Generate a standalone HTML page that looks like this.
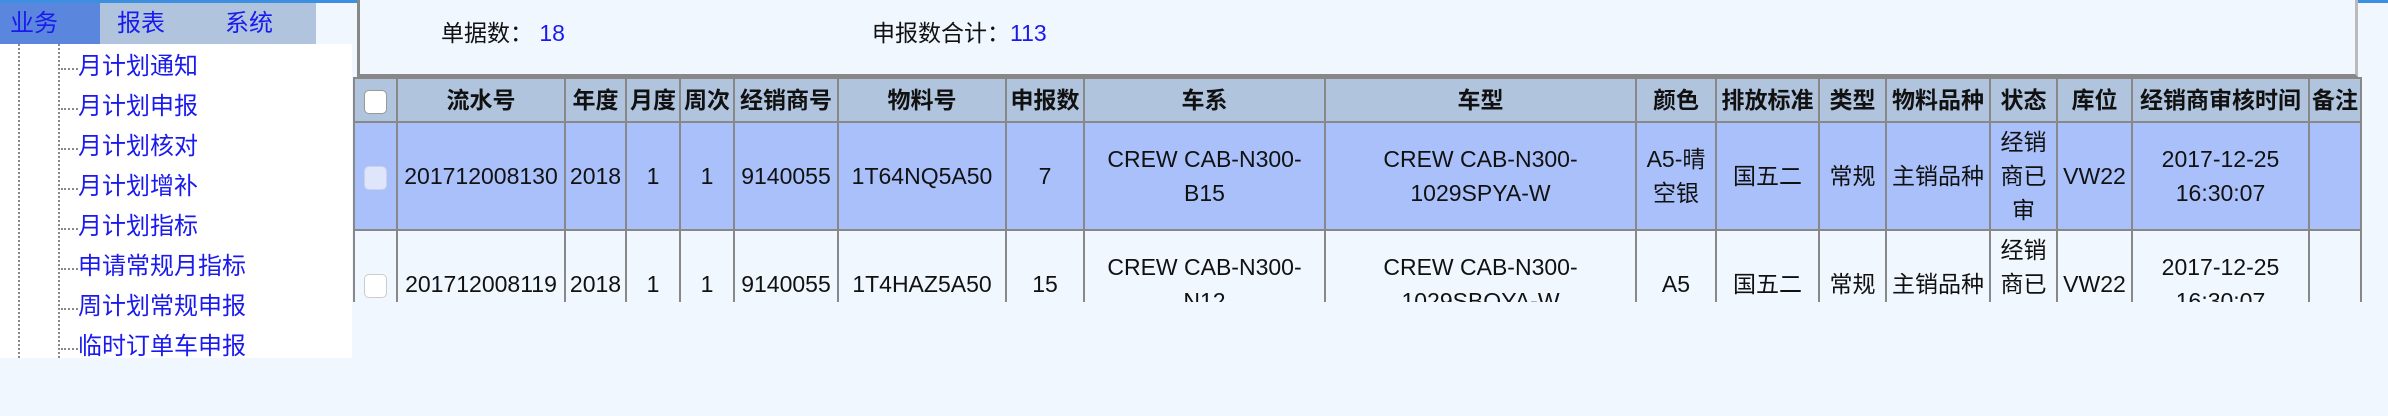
<!DOCTYPE html>
<html><head><meta charset="utf-8"><style>
*{margin:0;padding:0;box-sizing:border-box}
body{width:2388px;height:416px;overflow:hidden;background:#f0f7fe;font-family:"Liberation Sans","Noto Sans CJK SC",sans-serif;position:relative}
.topline{position:absolute;left:0;top:0;width:2388px;height:3px;background:#3d8fe0}
.tabs{position:absolute;left:0;top:3px;width:316px;height:41px;background:#b0c4de}
.tab{position:absolute;top:0;height:41px;line-height:41px;font-size:24px;color:#1a1aee}
.left{position:absolute;left:0;top:44px;width:352px;height:314px;background:#fff}
.vl{position:absolute;border-left:2px dotted #888}
.item{position:absolute;left:78px;font-size:24px;color:#1a1aee;line-height:28px}
.hl{position:absolute;left:61px;width:17px;border-top:2px dotted #888}
.stats{position:absolute;left:357px;top:0;width:2001px;height:77px;border-left:3px solid #888;border-right:3px solid #bbb;border-bottom:3px solid #888;background:#f0f7fe}
.st{position:absolute;top:18px;font-size:23px;line-height:30px;color:#111}
.st b{font-weight:normal;color:#1a1aee}
.tw{position:absolute;left:353px;top:77px;width:2011px;height:225px;overflow:hidden}
table{border-collapse:collapse;table-layout:fixed;width:2007px}
td,th{border:2px solid #888;text-align:center;font-size:23px;line-height:34px;color:#111;padding:0;overflow:hidden;white-space:normal}
th{background:#b0c4de;height:44px;font-weight:bold;white-space:nowrap}
tr.r1 td{background:#a9c0fa;height:108px}
tr.r2 td{background:#f0f7fe;height:108px}
.cb{display:inline-block;width:23px;height:24px;border-radius:5px;border:1px solid #ccc;background:#fff;vertical-align:middle}
tr.r1 .cb{background:#dfe6fb;border-color:#c8d2ee}
</style></head><body>
<div class="topline"></div>
<div class="tabs">
<div style="position:absolute;left:0;top:0;width:100px;height:41px;background:#5a86dd"></div>
<div class="tab" style="left:10px">业务</div>
<div class="tab" style="left:117px">报表</div>
<div class="tab" style="left:225px">系统</div>
</div>
<div class="left">
<div class="vl" style="left:18px;top:0;height:314px"></div>
<div class="vl" style="left:58px;top:0;height:314px"></div>
</div>
<div class="hl" style="top:68px"></div><div class="item" style="top:53px">月计划通知</div>
<div class="hl" style="top:108px"></div><div class="item" style="top:93px">月计划申报</div>
<div class="hl" style="top:148px"></div><div class="item" style="top:133px">月计划核对</div>
<div class="hl" style="top:188px"></div><div class="item" style="top:173px">月计划增补</div>
<div class="hl" style="top:228px"></div><div class="item" style="top:213px">月计划指标</div>
<div class="hl" style="top:268px"></div><div class="item" style="top:253px">申请常规月指标</div>
<div class="hl" style="top:308px"></div><div class="item" style="top:293px">周计划常规申报</div>
<div class="hl" style="top:348px"></div><div class="item" style="top:333px">临时订单车申报</div>

<div class="stats">
<div class="st" style="left:81px">单据数：&nbsp;<b>18</b></div>
<div class="st" style="left:512px">申报数合计：<b>113</b></div>
</div>
<div class="tw"><table>
<colgroup><col style="width:43px"><col style="width:168px"><col style="width:61px"><col style="width:54px"><col style="width:54px"><col style="width:104px"><col style="width:168px"><col style="width:78px"><col style="width:241px"><col style="width:311px"><col style="width:80px"><col style="width:103px"><col style="width:67px"><col style="width:104px"><col style="width:67px"><col style="width:75px"><col style="width:177px"><col style="width:52px"></colgroup>
<tr><th><span class="cb" style="border-color:#999"></span></th><th>流水号</th><th>年度</th><th>月度</th><th>周次</th><th>经销商号</th><th>物料号</th><th>申报数</th><th>车系</th><th>车型</th><th>颜色</th><th>排放标准</th><th>类型</th><th>物料品种</th><th>状态</th><th>库位</th><th>经销商审核时间</th><th>备注</th></tr>
<tr class="r1"><td><span class="cb"></span></td><td>201712008130</td><td>2018</td><td>1</td><td>1</td><td>9140055</td><td>1T64NQ5A50</td><td>7</td><td>CREW CAB-N300-<br>B15</td><td>CREW CAB-N300-<br>1029SPYA-W</td><td>A5-晴<br>空银</td><td>国五二</td><td>常规</td><td>主销品种</td><td>经销<br>商已<br>审</td><td>VW22</td><td>2017-12-25<br>16:30:07</td><td></td></tr>
<tr class="r2"><td><span class="cb"></span></td><td>201712008119</td><td>2018</td><td>1</td><td>1</td><td>9140055</td><td>1T4HAZ5A50</td><td>15</td><td>CREW CAB-N300-<br>N12</td><td>CREW CAB-N300-<br>1029SBQYA-W</td><td>A5</td><td>国五二</td><td>常规</td><td>主销品种</td><td>经销<br>商已<br>审</td><td>VW22</td><td>2017-12-25<br>16:30:07</td><td></td></tr>
</table></div>
</body></html>
